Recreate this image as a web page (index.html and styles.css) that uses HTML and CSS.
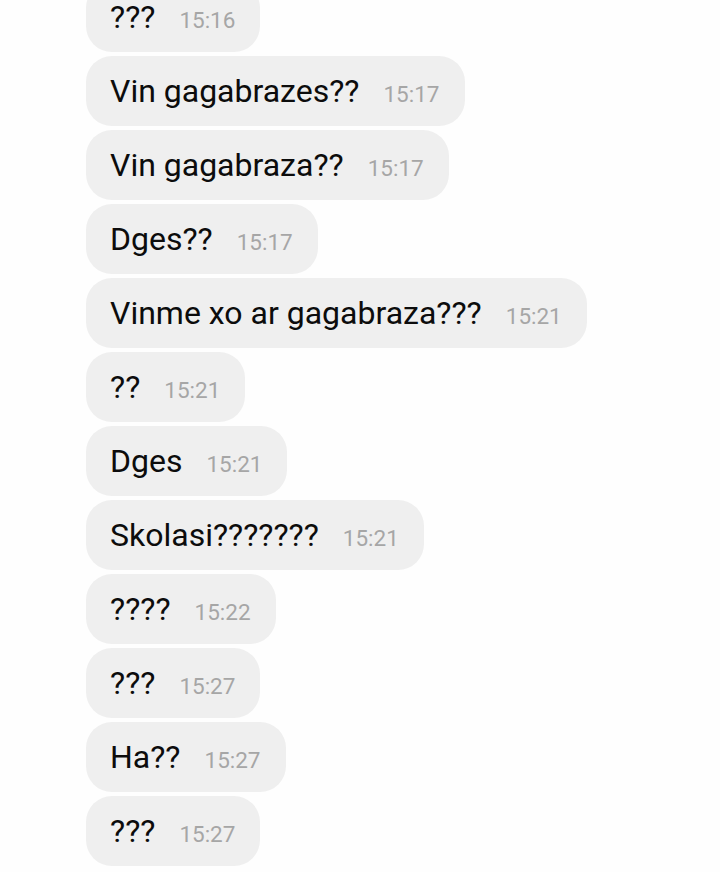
FILE: index.html
```html
<!DOCTYPE html>
<html lang="en">
<head>
    <meta charset="UTF-8">
    <meta name="viewport" content="width=device-width, initial-scale=1.0">
    <title>Chat</title>
    <link rel="stylesheet" href="styles.css">
</head>
<body>
    <div class="chat">
        <div class="msg"><span class="msg__text">???</span><span class="msg__time">15:16</span></div>
        <div class="msg"><span class="msg__text">Vin gagabrazes??</span><span class="msg__time">15:17</span></div>
        <div class="msg"><span class="msg__text">Vin gagabraza??</span><span class="msg__time">15:17</span></div>
        <div class="msg"><span class="msg__text">Dges??</span><span class="msg__time">15:17</span></div>
        <div class="msg"><span class="msg__text">Vinme xo ar gagabraza???</span><span class="msg__time">15:21</span></div>
        <div class="msg"><span class="msg__text">??</span><span class="msg__time">15:21</span></div>
        <div class="msg"><span class="msg__text">Dges</span><span class="msg__time">15:21</span></div>
        <div class="msg"><span class="msg__text">Skolasi???????</span><span class="msg__time">15:21</span></div>
        <div class="msg"><span class="msg__text">????</span><span class="msg__time">15:22</span></div>
        <div class="msg"><span class="msg__text">???</span><span class="msg__time">15:27</span></div>
        <div class="msg"><span class="msg__text">Ha??</span><span class="msg__time">15:27</span></div>
        <div class="msg"><span class="msg__text">???</span><span class="msg__time">15:27</span></div>
    </div>
</body>
</html>
```

FILE: styles.css
```css
* {
    margin: 0;
    padding: 0;
    box-sizing: border-box;
}

body {
    height: 100vh;
    background-color: #fefefe;
    font-family: Roboto, "Noto Sans", sans-serif;
    overflow: hidden;
}

.chat {
    display: flex;
    flex-direction: column;
    align-items: flex-start;
    gap: 4px;
    margin-top: -18px;
    padding-left: 86px;
}

.msg {
    height: 70px;
    line-height: 70px;
    padding: 0 25px 0 24px;
    background-color: #efefef;
    border-radius: 26px;
    white-space: nowrap;
}

.msg__text {
    font-size: 32px;
    color: #0c0c0c;
}

.msg__time {
    font-size: 22.5px;
    color: #a6a6a6;
    margin-left: 24px;
}
```
